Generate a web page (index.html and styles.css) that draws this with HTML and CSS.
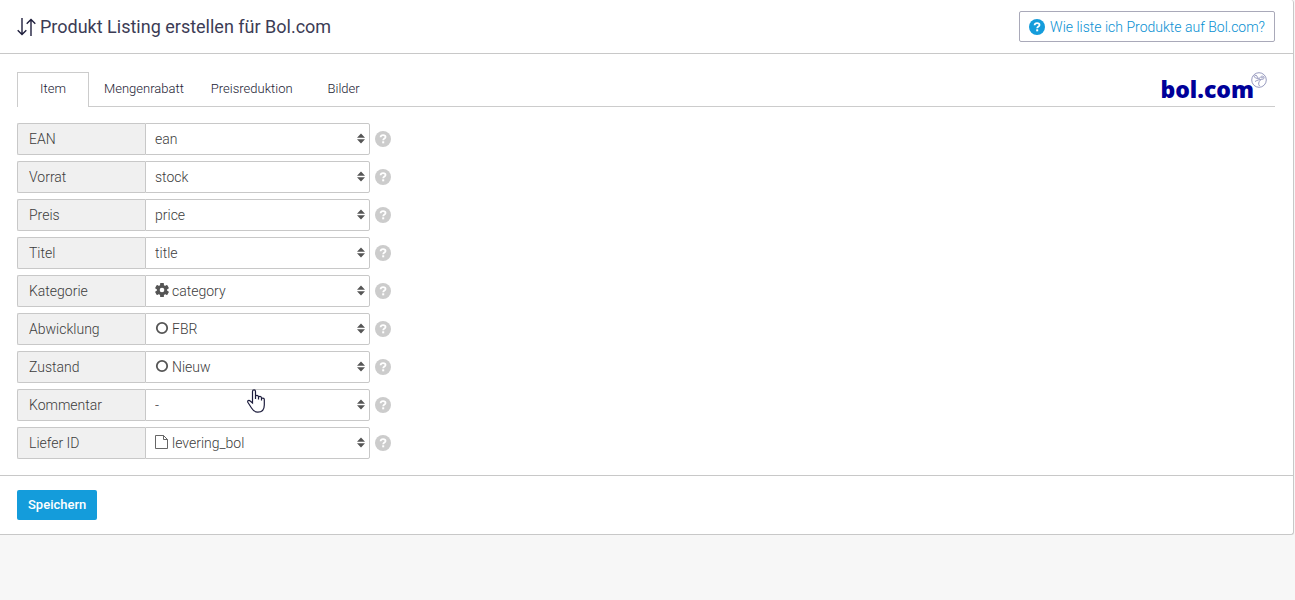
FILE: index.html
```html
<!DOCTYPE html>
<html lang="de">
  <head>
    <meta charset="UTF-8">
    <meta name="viewport" content="width=device-width, initial-scale=1.0">
    <title>Produkt Listing erstellen für Bol.com</title>
    <link rel="stylesheet" href="styles.css">
  </head>

  <body>
    <!-- Shared icons -->
    <svg class="sprite" aria-hidden="true">
      <symbol id="icon-help" viewBox="0 0 16 16">
        <circle cx="8" cy="8" r="8" fill="currentColor"/>
        <path d="M5.6 6.3C5.7 4.8 6.7 4.1 8.1 4.1C9.5 4.1 10.5 4.9 10.5 6C10.5 7.6 8.2 7.6 8.2 9.3" fill="none" stroke="#fff" stroke-width="1.8"/>
        <rect x="7.2" y="10.3" width="2" height="2" fill="#fff"/>
      </symbol>
      <symbol id="icon-sort" viewBox="0 0 8 10">
        <path d="M4 0L8 4.2H0ZM0 5.8H8L4 10Z" fill="currentColor"/>
      </symbol>
      <symbol id="icon-circle" viewBox="0 0 14 14">
        <circle cx="7" cy="7" r="5.2" fill="none" stroke="currentColor" stroke-width="1.8"/>
      </symbol>
      <symbol id="icon-gear" viewBox="0 0 14 14">
        <g fill="currentColor">
          <rect x="5.1" y="0" width="3.8" height="14" rx="0.5"/>
          <rect x="5.1" y="0" width="3.8" height="14" rx="0.5" transform="rotate(60 7 7)"/>
          <rect x="5.1" y="0" width="3.8" height="14" rx="0.5" transform="rotate(120 7 7)"/>
          <circle cx="7" cy="7" r="5.2"/>
        </g>
        <circle cx="7" cy="7" r="2.3" fill="#fff"/>
      </symbol>
      <symbol id="icon-file" viewBox="0 0 14 14">
        <path d="M0.5 0.5H8.5L12.5 4.5V13.5H0.5ZM8.5 0.5V4.5H12.5" fill="none" stroke="currentColor" stroke-width="0.9"/>
      </symbol>
    </svg>

    <main class="panel">
      <header class="panel-header">
        <h1>
          <svg class="title-icon" viewBox="0 0 19 18" aria-hidden="true">
            <path d="M5 0V16M0.7 12.200L5 16.500L9.300 12.200M14 18V2M9.700 5.800L14 1.500L18.300 5.800" fill="none" stroke="currentColor" stroke-width="1.400"/>
          </svg>
          Produkt Listing erstellen für Bol.com
        </h1>
        <a class="help-link" href="#">
          <svg class="icon-help" aria-hidden="true"><use href="#icon-help"/></svg>
          Wie liste ich Produkte auf Bol.com?
        </a>
      </header>

      <form>
        <div class="panel-body">
          <div class="tab-bar">
            <nav class="tabs">
              <button type="button" class="tab active">Item</button>
              <button type="button" class="tab">Mengenrabatt</button>
              <button type="button" class="tab">Preisreduktion</button>
              <button type="button" class="tab">Bilder</button>
            </nav>
            <div class="logo">
              <span>bol.com</span>
              <svg class="logo-mark" viewBox="0 0 16 16" aria-hidden="true">
                <g fill="none" stroke="#8c90b8">
                  <circle cx="8" cy="8" r="7.3" stroke-width="0.9"/>
                  <path d="M3 4.500L5 3L7.500 6.500L4.500 6ZM8 7.500C9 4.500 11 3.500 12.500 4.500C14 6 12.500 7.500 10.500 7.500C8.500 7.500 6.500 8 4 9.500M9.500 8C7.500 10 7 12 8.500 14M10 5.800H12.500" stroke-width="0.9"/>
                </g>
              </svg>
            </div>
          </div>

          <div class="fields">
            <div class="field">
              <label for="ean">EAN</label>
              <div class="select">
                <select id="ean"><option>ean</option></select>
                <svg class="sort" aria-hidden="true"><use href="#icon-sort"/></svg>
              </div>
              <svg class="icon-help" aria-hidden="true"><use href="#icon-help"/></svg>
            </div>
            <div class="field">
              <label for="stock">Vorrat</label>
              <div class="select">
                <select id="stock"><option>stock</option></select>
                <svg class="sort" aria-hidden="true"><use href="#icon-sort"/></svg>
              </div>
              <svg class="icon-help" aria-hidden="true"><use href="#icon-help"/></svg>
            </div>
            <div class="field">
              <label for="price">Preis</label>
              <div class="select">
                <select id="price"><option>price</option></select>
                <svg class="sort" aria-hidden="true"><use href="#icon-sort"/></svg>
              </div>
              <svg class="icon-help" aria-hidden="true"><use href="#icon-help"/></svg>
            </div>
            <div class="field">
              <label for="title">Titel</label>
              <div class="select">
                <select id="title"><option>title</option></select>
                <svg class="sort" aria-hidden="true"><use href="#icon-sort"/></svg>
              </div>
              <svg class="icon-help" aria-hidden="true"><use href="#icon-help"/></svg>
            </div>
            <div class="field">
              <label for="category">Kategorie</label>
              <div class="select with-icon">
                <select id="category"><option>category</option></select>
                <svg class="value-icon" aria-hidden="true"><use href="#icon-gear"/></svg>
                <svg class="sort" aria-hidden="true"><use href="#icon-sort"/></svg>
              </div>
              <svg class="icon-help" aria-hidden="true"><use href="#icon-help"/></svg>
            </div>
            <div class="field">
              <label for="fulfilment">Abwicklung</label>
              <div class="select with-icon">
                <select id="fulfilment"><option>FBR</option></select>
                <svg class="value-icon" aria-hidden="true"><use href="#icon-circle"/></svg>
                <svg class="sort" aria-hidden="true"><use href="#icon-sort"/></svg>
              </div>
              <svg class="icon-help" aria-hidden="true"><use href="#icon-help"/></svg>
            </div>
            <div class="field">
              <label for="condition">Zustand</label>
              <div class="select with-icon">
                <select id="condition"><option>Nieuw</option></select>
                <svg class="value-icon" aria-hidden="true"><use href="#icon-circle"/></svg>
                <svg class="sort" aria-hidden="true"><use href="#icon-sort"/></svg>
              </div>
              <svg class="icon-help" aria-hidden="true"><use href="#icon-help"/></svg>
            </div>
            <div class="field">
              <label for="comment">Kommentar</label>
              <div class="select">
                <select id="comment"><option>-</option></select>
                <svg class="sort" aria-hidden="true"><use href="#icon-sort"/></svg>
                <svg class="pointer" viewBox="0 0 18 24" aria-hidden="true">
                  <path d="M5.500 14V2.500C5.500 0.300 8.500 0.300 8.500 2.500V10V7.500C8.500 6 11.500 6 11.500 8V10.500V8.500C11.500 7 14.500 7 14.500 9V11.500V10C14.500 8.700 17.300 8.700 17.300 10.500V16C17.300 21 14.500 23.200 10.800 23.200C7.500 23.200 6 21.500 4.500 19L1 13.500C0 11.500 2 10.800 3.200 12Z" fill="#fff" stroke="#1c1c3c" stroke-width="1.200"/>
                </svg>
              </div>
              <svg class="icon-help" aria-hidden="true"><use href="#icon-help"/></svg>
            </div>
            <div class="field">
              <label for="delivery">Liefer ID</label>
              <div class="select with-icon">
                <select id="delivery"><option>levering_bol</option></select>
                <svg class="value-icon" aria-hidden="true"><use href="#icon-file"/></svg>
                <svg class="sort" aria-hidden="true"><use href="#icon-sort"/></svg>
              </div>
              <svg class="icon-help" aria-hidden="true"><use href="#icon-help"/></svg>
            </div>
          </div>
        </div>

        <footer class="panel-footer">
          <button type="submit" class="save">Speichern</button>
        </footer>
      </form>
    </main>
  </body>
</html>
```
FILE: styles.css
```css
* {
  box-sizing: border-box;
}

body {
  margin: 0;
  background-color: #f7f7f7;
  color: #555;
  font-family: Roboto, sans-serif;
  font-size: 14px;
}

button,
select {
  font-family: inherit;
}

.sprite {
  display: none;
}

.panel {
  margin-right: 1px;
  background-color: #fff;
  border: 1px solid #c8c8c8;
  border-width: 0 1px 1px 0;
  border-radius: 0 3px 3px 0;
}

.panel-header {
  display: flex;
  align-items: center;
  justify-content: space-between;
  padding: 11px 18px 11px 17px;
  border-bottom: 1px solid #c8c8c8;
}

h1 {
  display: flex;
  align-items: center;
  gap: 4px;
  margin: 0;
  color: #3c3c55;
  font-size: 18px;
  font-weight: 400;
}

.title-icon {
  width: 19px;
  height: 18px;
  color: #1f1f3d;
}

.help-link {
  display: flex;
  align-items: center;
  gap: 5px;
  height: 31px;
  padding: 0 9px;
  border: 1px solid #a9a9b9;
  border-radius: 2px;
  color: #0890d2;
  font-size: 14px;
  font-weight: 300;
  text-decoration: none;
}

.icon-help {
  flex: none;
  width: 16px;
  height: 16px;
}

.help-link .icon-help {
  color: #149cdb;
}

.panel-body {
  padding: 18px 18px 16px 17px;
}

/* Tabs */
.tab-bar {
  display: flex;
  justify-content: space-between;
  border-bottom: 1px solid #ccc;
}

.tabs {
  display: flex;
  gap: 3px;
  margin-bottom: -1px;
}

.tab {
  min-width: 72px;
  height: 35px;
  padding: 0 11px 3px;
  background: none;
  border: 1px solid transparent;
  border-bottom: none;
  color: #222233;
  font-size: 13px;
  font-weight: 300;
  cursor: pointer;
}

.tab.active {
  background-color: #fff;
  border-color: #ccc;
}

.logo {
  display: flex;
  align-items: flex-start;
  padding-right: 8px;
  color: #000099;
  font-family: "Open Sans", sans-serif;
  font-size: 23px;
  font-weight: 800;
  line-height: 34px;
}

.logo-mark {
  width: 16px;
  height: 16px;
  margin-left: -3px;
}

/* Form rows */
.fields {
  display: grid;
  gap: 6px;
  padding-top: 16px;
}

.field {
  display: flex;
  align-items: center;
  color: #ccc;
}

.field label {
  width: 128px;
  height: 32px;
  padding-left: 11px;
  background-color: #f0f0f0;
  border: 1px solid #c8c8c8;
  border-right: none;
  border-radius: 2px 0 0 2px;
  color: #3c3c3c;
  font-weight: 300;
  line-height: 30px;
}

.select {
  position: relative;
  width: 225px;
  margin-right: 5px;
  color: #555;
}

.select select {
  display: block;
  width: 100%;
  height: 32px;
  padding: 0 20px 0 9px;
  appearance: none;
  background-color: #fff;
  border: 1px solid #c8c8c8;
  border-radius: 0 2px 2px 0;
  color: #3c3c3c;
  font-size: 14px;
  font-weight: 300;
}

.select.with-icon select {
  padding-left: 26px;
}

.sort {
  position: absolute;
  top: 10px;
  right: 5px;
  width: 8px;
  height: 11px;
  pointer-events: none;
}

.value-icon {
  position: absolute;
  top: 8px;
  left: 10px;
  width: 14px;
  height: 14px;
  pointer-events: none;
}

.pointer {
  position: absolute;
  top: 0;
  left: 102px;
  width: 18px;
  height: 24px;
  pointer-events: none;
}

.panel-footer {
  padding: 14px 17px;
  border-top: 1px solid #c8c8c8;
}

.save {
  height: 30px;
  padding: 0 11px 1px;
  background-color: #149cdb;
  border: none;
  border-radius: 2px;
  color: #fff;
  font-size: 13px;
  font-weight: 500;
  cursor: pointer;
}
```
